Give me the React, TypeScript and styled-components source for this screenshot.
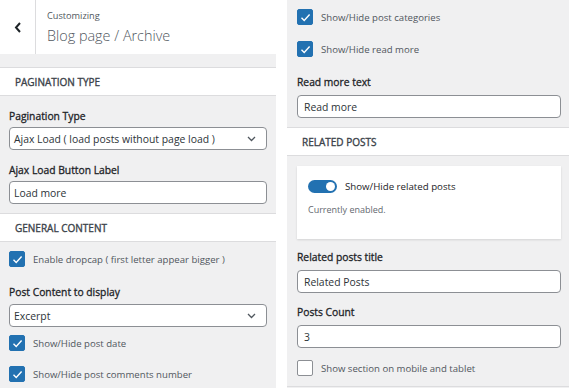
import React from "react";
import styled, { createGlobalStyle } from "styled-components";

const Global = createGlobalStyle`
  html, body { margin: 0; padding: 0; background: #fff; }
  body { font-family: "Open Sans", "Noto Sans", Arial, sans-serif; color: #1d2327; }
  * { box-sizing: border-box; }
`;

const Page = styled.div`
  display: flex;
  width: 569px;
  height: 388px;
  overflow: hidden;
  background: #fff;
`;

const Panel = styled.div<{ $w?: number }>`
  display: flex;
  flex-direction: column;
  background: #f0f0f1;
  ${(p) => (p.$w ? `width: ${p.$w}px; flex: none;` : "flex: 1;")}
  height: 388px;
`;

const Gap = styled.div`
  width: 11px;
  flex: none;
  background: #fff;
`;

const Header = styled.div`
  display: flex;
  height: 54px;
  background: #fff;
  flex: none;
`;

const BackButton = styled.div`
  width: 36px;
  border-right: 1px solid #dcdcde;
  display: flex;
  align-items: center;
  justify-content: center;
  color: #1d2327;
`;

const Titles = styled.div`
  display: flex;
  flex-direction: column;
  padding: 9px 0 0 11px;
`;

const Small = styled.div`
  font-size: 9.2px;
  line-height: 13px;
  color: #50575e;
`;

const Big = styled.div`
  margin-top: 4px;
  font-size: 14.4px;
  line-height: 20px;
  font-weight: 300;
  color: #50575e;
`;

const Section = styled.div<{ $mt: number }>`
  margin-top: ${(p) => p.$mt}px;
  height: 29px;
  flex: none;
  background: #fff;
  border-top: 1px solid #dcdcde;
  border-bottom: 1px solid #dcdcde;
  display: flex;
  align-items: center;
  padding-left: 15px;
  font-size: 10px;
  font-weight: 400;
  -webkit-text-stroke: 0.35px #3c434a;
  color: #3c434a;
`;

const Body = styled.div<{ $l: number; $r: number }>`
  display: flex;
  flex-direction: column;
  padding: 0 ${(p) => p.$r}px 0 ${(p) => p.$l}px;
`;

const Label = styled.div<{ $mt: number }>`
  margin-top: ${(p) => p.$mt}px;
  font-size: 10.3px;
  line-height: 16px;
  font-weight: 400;
  -webkit-text-stroke: 0.3px #1d2327;
  color: #1d2327;
`;

const Field = styled.div<{ $mt: number; $pad?: number }>`
  margin-top: ${(p) => p.$mt}px;
  height: 23px;
  background: #fff;
  border: 1px solid #8c8f94;
  border-radius: 4px;
  display: flex;
  align-items: center;
  justify-content: space-between;
  padding: 0 10px 0 ${(p) => p.$pad ?? 6}px;
  font-size: 10.4px;
  color: #2c3338;
`;

const CheckRow = styled.div<{ $mt: number }>`
  margin-top: ${(p) => p.$mt}px;
  display: flex;
  align-items: center;
  height: 16px;
  gap: 8px;
  font-size: 9.6px;
  color: #50575e;
`;

const Box = styled.div<{ $on: boolean }>`
  width: 16px;
  height: 16px;
  flex: none;
  border-radius: 2px;
  display: flex;
  align-items: center;
  justify-content: center;
  background: ${(p) => (p.$on ? "#2271b1" : "#fff")};
  border: 1px solid ${(p) => (p.$on ? "#2271b1" : "#8c8f94")};
`;

const Card = styled.div`
  margin-top: 10px;
  height: 73px;
  background: #fff;
  box-shadow: 0 1px 2px rgba(0, 0, 0, 0.12);
  display: flex;
  flex-direction: column;
  padding: 13px 11px 0 11px;
`;

const ToggleRow = styled.div`
  display: flex;
  align-items: center;
  gap: 8px;
  font-size: 9.7px;
  color: #1d2327;
  height: 14px;
`;

const Toggle = styled.div`
  width: 29px;
  height: 13px;
  border-radius: 7px;
  background: #2271b1;
  display: flex;
  align-items: center;
  justify-content: flex-end;
  padding-right: 2px;
`;

const Knob = styled.div`
  width: 9px;
  height: 9px;
  border-radius: 50%;
  background: #fff;
`;

const Note = styled.div`
  margin-top: 10px;
  font-size: 9px;
  line-height: 13px;
  color: #646970;
`;

const BottomLine = styled.div`
  margin-top: auto;
  height: 2px;
  border-top: 1px solid #dcdcde;
`;

const Check = () => (
  <svg width="11" height="9" viewBox="0 0 11 9">
    <path d="M1.5 4.8 L4.2 7.4 L9.6 1.6" stroke="#fff" strokeWidth="1.4" fill="none" />
  </svg>
);

const Chevron = () => (
  <svg width="9" height="6" viewBox="0 0 9 6">
    <path d="M1 1 L4.5 4.5 L8 1" stroke="#50575e" strokeWidth="1.3" fill="none" />
  </svg>
);

const Back = () => (
  <svg width="8" height="11" viewBox="0 0 8 11">
    <path d="M6 1 L2 5.5 L6 10" stroke="#1d2327" strokeWidth="2" fill="none" />
  </svg>
);

const CB = ({ on, mt, children }: { on: boolean; mt: number; children: React.ReactNode }) => (
  <CheckRow $mt={mt}>
    <Box $on={on}>{on && <Check />}</Box>
    <span>{children}</span>
  </CheckRow>
);

export default function App() {
  return (
    <>
      <Global />
      <Page>
        <Panel $w={276}>
          <Header>
            <BackButton>
              <Back />
            </BackButton>
            <Titles>
              <Small>Customizing</Small>
              <Big>Blog page / Archive</Big>
            </Titles>
          </Header>
          <Section $mt={13}>PAGINATION TYPE</Section>
          <Body $l={9} $r={9}>
            <Label $mt={12}>Pagination Type</Label>
            <Field $mt={3} $pad={4}>
              <span>Ajax Load ( load posts without page load )</span>
              <Chevron />
            </Field>
            <Label $mt={12}>Ajax Load Button Label</Label>
            <Field $mt={3} $pad={4}>Load more</Field>
          </Body>
          <Section $mt={9}>GENERAL CONTENT</Section>
          <Body $l={9} $r={9}>
            <CB on mt={9}>Enable dropcap ( first letter appear bigger )</CB>
            <Label $mt={17}>Post Content to display</Label>
            <Field $mt={4} $pad={4}>
              <span>Excerpt</span>
              <Chevron />
            </Field>
            <CB on mt={8}>Show/Hide post date</CB>
            <CB on mt={15}>Show/Hide post comments number</CB>
          </Body>
        </Panel>
        <Gap />
        <Panel>
          <Body $l={10} $r={8}>
            <CB on mt={9}>Show/Hide post categories</CB>
            <CB on mt={16}>Show/Hide read more</CB>
            <Label $mt={17}>Read more text</Label>
            <Field $mt={5}>Read more</Field>
          </Body>
          <Section $mt={9}>RELATED POSTS</Section>
          <Body $l={10} $r={8}>
            <Card>
              <ToggleRow>
                <Toggle>
                  <Knob />
                </Toggle>
                <span>Show/Hide related posts</span>
              </ToggleRow>
              <Note>Currently enabled.</Note>
            </Card>
            <Label $mt={10}>Related posts title</Label>
            <Field $mt={5}>Related Posts</Field>
            <Label $mt={11}>Posts Count</Label>
            <Field $mt={5}>3</Field>
            <CB on={false} mt={12}>Show section on mobile and tablet</CB>
          </Body>
          <BottomLine />
        </Panel>
      </Page>
    </>
  );
}
